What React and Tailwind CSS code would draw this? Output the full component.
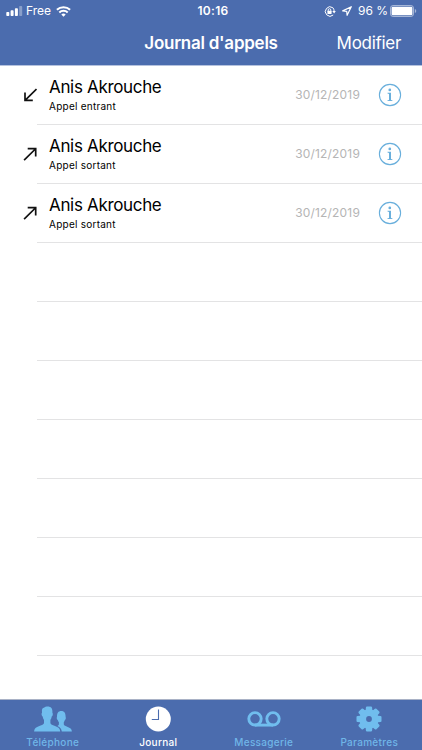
import React from "react";

const calls = [
  { name: "Anis Akrouche", type: "Appel entrant", date: "30/12/2019", incoming: true },
  { name: "Anis Akrouche", type: "Appel sortant", date: "30/12/2019", incoming: false },
  { name: "Anis Akrouche", type: "Appel sortant", date: "30/12/2019", incoming: false },
];

const emptyRows = [0, 1, 2, 3, 4, 5, 6];

function SignalIcon() {
  return (
    <svg width="17" height="10" viewBox="0 0 17 10" fill="#fff">
      <rect x="0.3" y="6" width="3" height="4" rx="0.8" />
      <rect x="4.6" y="4.3" width="3" height="5.7" rx="0.8" />
      <rect x="8.9" y="2.3" width="3" height="7.7" rx="0.8" />
      <rect x="13.2" y="0" width="3" height="10" rx="0.8" opacity="0.35" />
    </svg>
  );
}

function WifiIcon() {
  return (
    <svg width="15" height="11" viewBox="0 0 15 11" fill="none" stroke="#fff" strokeWidth="2">
      <path d="M0.9 3.8a9.5 9.5 0 0 1 13.2 0" />
      <path d="M3.3 6.5a6 6 0 0 1 8.4 0" />
      <path d="M7.5 10.8 5.3 8.6a3.1 3.1 0 0 1 4.4 0z" fill="#fff" stroke="none" />
    </svg>
  );
}

function LockIcon() {
  return (
    <svg width="12" height="11" viewBox="0 0 12 11" fill="none" stroke="#fff" strokeWidth="1">
      <path d="M8.8 1.7A4.7 4.7 0 1 0 9.2 9" />
      <path d="M8.8 1.7a4.7 4.7 0 0 1 1.3 3.3" />
      <path d="M8.3 5h3.5l-1.7 2.5z" fill="#fff" stroke="none" />
      <rect x="3.4" y="4.8" width="4.2" height="3.2" rx="0.4" fill="#fff" stroke="none" />
      <path d="M4.2 5V4a1.3 1.3 0 0 1 2.6 0v1" strokeWidth="0.9" />
    </svg>
  );
}

function LocationIcon() {
  return (
    <svg width="10" height="10" viewBox="0 0 10 10" fill="none" stroke="#fff" strokeWidth="1.2" strokeLinejoin="round">
      <path d="M9.3 0.7 0.7 4.9l4 .4.4 4z" />
    </svg>
  );
}

function BatteryIcon() {
  return (
    <svg width="27" height="12" viewBox="0 0 27 12" fill="none">
      <rect x="0.5" y="0.5" width="23" height="11" rx="2.6" stroke="#fff" strokeOpacity="0.5" />
      <rect x="1.6" y="1.8" width="20.8" height="8.4" rx="1.3" fill="#fff" />
      <path d="M24.8 4v4c.9-.3 1.4-1.1 1.4-2s-.5-1.7-1.4-2z" fill="#fff" fillOpacity="0.5" />
    </svg>
  );
}

function CallArrow({ incoming }) {
  return (
    <svg width="14" height="14" viewBox="0 0 14 14" fill="none" stroke="#111" strokeWidth="1.7">
      {incoming ? (
        <path d="M13.5 1 2.3 12.2M2 4.6v7.8h7.8" />
      ) : (
        <path d="M1.1 13.2 12.4 2M4.7 1.7h8v7.8" />
      )}
    </svg>
  );
}

function InfoIcon() {
  return (
    <svg width="24" height="24" viewBox="0 0 24 24" fill="#69afdc">
      <circle cx="12" cy="12" r="10.6" fill="none" stroke="#69afdc" strokeWidth="1.1" />
      <circle cx="11.8" cy="6.9" r="1.35" />
      <path d="M9.5 9.7h3.5v7.2l1.4.3v.8H9.5v-.8l1.5-.3v-6l-1.5-.4z" />
    </svg>
  );
}

function PeopleIcon() {
  return (
    <svg width="38" height="26" viewBox="0 0 38 26" fill="#70bdee">
      <path d="M13.6.4C17 .4 18.7 2.4 18.4 6.4C18.4 7 19 7.4 18.8 8.4C18.6 9.6 18.2 10.2 17.7 10.6C17.4 12.4 16.9 13.4 16.4 14V17.3C17.2 19.2 20.4 19.6 23.2 21C25.4 22 26 23.4 26.2 25.6H.1C.3 23.4 1 22 3.2 21C6 19.6 9.2 19.2 10 17.3V14C9.5 13.4 9 12.4 8.7 10.6C8.2 10.2 7.8 9.6 7.6 8.4C7.4 7.4 8 7 8 6.4C7.6 3 8.4 1.6 10.4 1.4C11 .7 12.2 .4 13.6 .4z" />
      <path d="M27.3 4.9C30.4 4.9 31.6 7 31.6 10.5C31.6 11.2 32 11.6 31.8 12.6C31.6 13.4 31.3 13.8 30.9 14.1C30.6 15.2 30.2 15.9 29.8 16.3V18.6C30.4 20 32.6 20.4 34.8 21.4C37 22.3 37.7 23.4 37.9 25.6H27.8C27.5 22.7 26.2 21.3 23.4 20C24.2 19.6 24.7 19.2 24.9 18.6V16.3C24.4 15.9 24 15.2 23.7 14.1C23.3 13.8 23 13.4 22.8 12.6C22.6 11.6 23 11.2 23 10.5C23 7 24.2 4.9 27.3 4.9z" />
    </svg>
  );
}

function ClockIcon() {
  return (
    <svg width="26" height="26" viewBox="0 0 26 26">
      <circle cx="13.3" cy="13" r="12.5" fill="#fff" />
      <path d="M13.5 3.6v9.9H6.8" fill="none" stroke="#4b6cae" strokeWidth="1.1" />
    </svg>
  );
}

function VoicemailIcon() {
  return (
    <svg width="34" height="16" viewBox="0 0 34 16" fill="none" stroke="#70bdee" strokeWidth="2.9">
      <circle cx="8" cy="7.8" r="6.2" />
      <circle cx="26" cy="7.8" r="6.2" />
      <path d="M8 14.1h18" />
    </svg>
  );
}

function GearIcon() {
  const angles = [0, 45, 90, 135, 180, 225, 270, 315];
  return (
    <svg width="26" height="26" viewBox="0 0 26 26" fill="#70bdee">
      <circle cx="13" cy="13" r="6.3" fill="none" stroke="#70bdee" strokeWidth="6.8" />
      {angles.map((a) => (
        <path key={a} d="M9.5 6 9.9 1.6Q10 .5 11 .5h4q1 0 1.1 1.1L16.5 6z" transform={`rotate(${a} 13 13)`} />
      ))}
    </svg>
  );
}

const tabs = [
  { label: "Téléphone", Icon: PeopleIcon },
  { label: "Journal", Icon: ClockIcon, active: true },
  { label: "Messagerie", Icon: VoicemailIcon },
  { label: "Paramètres", Icon: GearIcon },
];

export default function App() {
  return (
    <div className="flex h-[750px] w-[422px] flex-col overflow-hidden bg-white font-['Inter','Liberation_Sans',sans-serif]">
      <header className="h-[66px] shrink-0 border-b border-[#b5c2de] bg-[#4b6cae] text-white">
        <div className="grid h-[22px] grid-cols-3 items-center pl-1.5 pr-[5px] text-[12px] leading-none">
          <div className="flex items-center">
            <SignalIcon />
            <span className="ml-[3px] mr-[5px]">Free</span>
            <WifiIcon />
          </div>
          <span className="pl-[3px] text-center font-semibold tracking-[0.3px]">10:16</span>
          <div className="flex items-center justify-end">
            <LockIcon />
            <span className="ml-1.5 flex"><LocationIcon /></span>
            <span className="ml-1.5 mr-0.5 whitespace-nowrap">96 %</span>
            <BatteryIcon />
          </div>
        </div>
        <div className="grid h-[43px] grid-cols-[1fr_auto_1fr] items-center text-[17px] leading-none">
          <span />
          <h1 className="whitespace-nowrap font-semibold tracking-[-0.25px]">Journal d'appels</h1>
          <button className="justify-self-end pr-[21px] tracking-[-0.3px]">Modifier</button>
        </div>
      </header>

      <main className="flex-1 overflow-hidden">
        {calls.map((call, i) => (
          <div key={i} className="flex h-[59px] items-center">
            <div className="flex w-[37px] shrink-0 justify-end pb-0.5">
              <CallArrow incoming={call.incoming} />
            </div>
            <div className="flex h-full flex-1 items-center border-b border-[#e3e3e4] pl-3 pr-5">
              <div className="flex-1">
                <div className="text-[17px] leading-[22px] tracking-[-0.33px] text-black">{call.name}</div>
                <div className="mt-px pb-px text-[10px] leading-[14px] tracking-[0.25px] text-black">{call.type}</div>
              </div>
              <span className="mr-[18px] text-[12px] tracking-[0.18px] text-[#b5b5b5]">{call.date}</span>
              <InfoIcon />
            </div>
          </div>
        ))}
        {emptyRows.map((row) => (
          <div key={row} className="ml-[37px] h-[59px] border-b border-[#e3e3e4]" />
        ))}
      </main>

      <nav className="grid h-[51px] shrink-0 grid-cols-4 border-t border-[#a9b2c6] bg-[#4b6cae]">
        {tabs.map(({ label, Icon, active }) => (
          <div key={label} className="flex flex-col items-center">
            <div className="mt-[5px] flex h-7 items-center">
              <Icon />
            </div>
            <span className={`mt-[3px] text-[10px] font-medium leading-[12px] tracking-[0.3px] ${active ? "text-white" : "text-[#70b6e8]"}`}>
              {label}
            </span>
          </div>
        ))}
      </nav>
    </div>
  );
}
